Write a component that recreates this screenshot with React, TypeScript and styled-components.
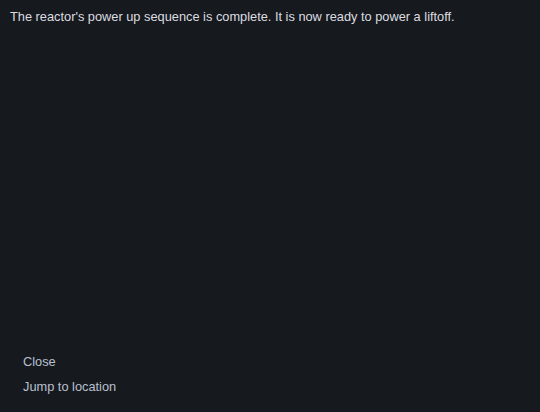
import React from "react";
import styled, { createGlobalStyle } from "styled-components";

const Global = createGlobalStyle`
  html, body { margin: 0; padding: 0; background: #16191e; }
  body { font-family: "Liberation Sans", Arial, sans-serif; }
`;

const Screen = styled.div`
  width: 540px;
  height: 412px;
  background: #16191e;
  display: flex;
  flex-direction: column;
  justify-content: space-between;
  box-sizing: border-box;
  padding: 9px 0 17px 10px;
`;

const Message = styled.p`
  margin: 0;
  font-size: 12.8px;
  line-height: 16px;
  color: #dcdde0;
`;

const Actions = styled.div`
  display: flex;
  flex-direction: column;
  gap: 9px;
  padding-left: 13px;
`;

const ActionLink = styled.button`
  all: unset;
  cursor: pointer;
  font-family: "Liberation Sans", Arial, sans-serif;
  font-size: 12.8px;
  line-height: 16px;
  color: #b9c0cf;
`;

export default function App() {
  return (
    <>
      <Global />
      <Screen>
        <Message>
          The reactor's power up sequence is complete. It is now ready to power a liftoff.
        </Message>
        <Actions>
          <ActionLink>Close</ActionLink>
          <ActionLink>Jump to location</ActionLink>
        </Actions>
      </Screen>
    </>
  );
}
